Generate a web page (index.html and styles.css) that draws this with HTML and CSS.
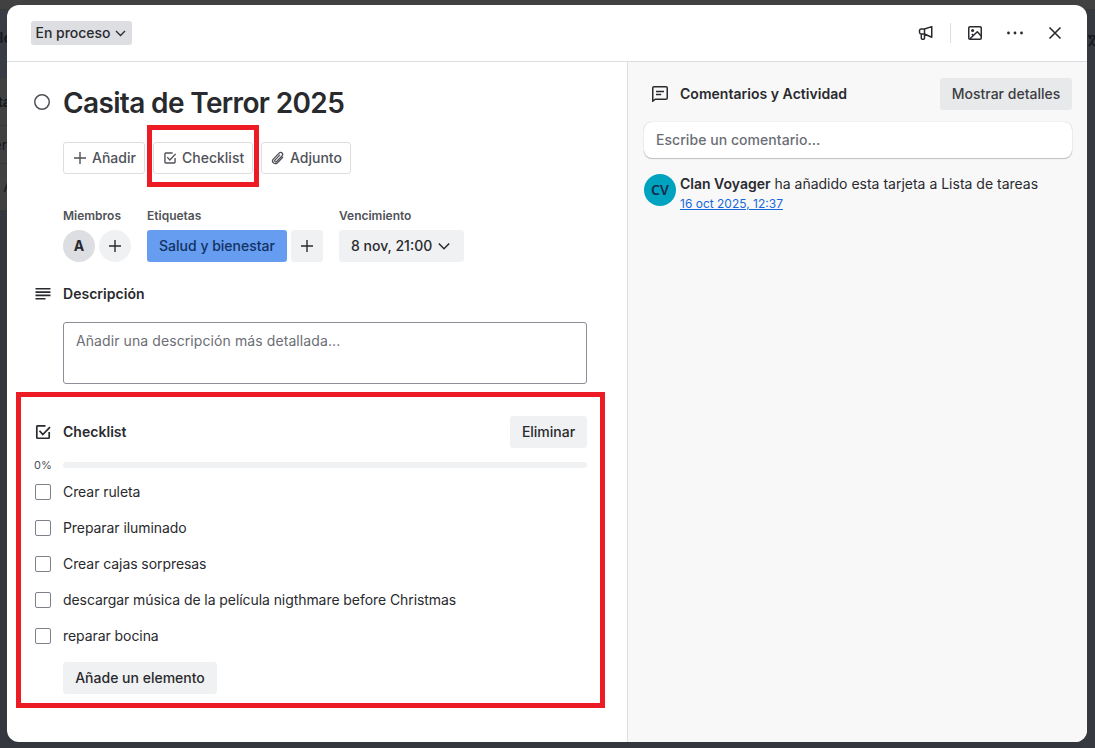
FILE: index.html
```html
<!DOCTYPE html>
<html lang="es">
<head>
<meta charset="utf-8">
<title>Casita de Terror 2025</title>
<link rel="stylesheet" href="styles.css">
</head>
<body>
<div class="board">
  <div class="board-left">
    <div class="frag frag-head"><b>lo</b></div>
    <div class="frag frag-one"><b>ta</b></div>
    <div class="frag frag-two"><span>er</span></div>
    <div class="frag frag-three"><span class="lead">A</span></div>
  </div>
  <div class="board-right">
    <svg class="board-icon" width="8" height="14" viewBox="0 0 8 14" fill="none" stroke="#14171b" stroke-width="1.5"><path d="M8 2H2l2 3M2 12l6-9M5 9l3 3"/></svg>
  </div>
</div>

<main class="modal">
  <header class="top">
    <button class="status"><span>En proceso</span>
      <svg width="16" height="16" viewBox="0 0 16 16" fill="none" stroke="#292a2e" stroke-width="1.3"><path d="M3 6l4.500 4.500L12 6"/></svg>
    </button>
    <div class="tools">
      <span class="tool"><svg width="16" height="16" viewBox="0 0 16 16" fill="none" stroke="#292a2e" stroke-width="1.5" stroke-linejoin="round"><path d="M6.500 4H3.200Q1.500 4 1.500 5.700v1.600Q1.500 9 3.200 9H6.500zM6.500 4l7.250-2.400v10.600L6.500 9M3.300 9v4.200q0 1 1 1h1.200q1 0 1-1V9"/></svg></span>
      <span class="rule"></span>
      <span class="tool"><svg width="16" height="16" viewBox="0 0 16 16" fill="none" stroke="#292a2e" stroke-width="1.5" stroke-linejoin="round"><rect x="1.750" y="1.750" width="12.500" height="12.500" rx="1.200"/><circle cx="5.600" cy="5.600" r="1.500" fill="#292a2e" stroke="none"/><path d="M3 13.800l7.300-7.100 3.900 4.200M6.300 10.500L4.800 9"/></svg></span>
      <span class="tool"><svg width="18" height="16" viewBox="0 0 18 16" fill="#292a2e"><circle cx="2.500" cy="8" r="1.400"/><circle cx="9" cy="8" r="1.400"/><circle cx="15.500" cy="8" r="1.400"/></svg></span>
      <span class="tool"><svg width="16" height="16" viewBox="0 0 16 16" fill="none" stroke="#292a2e" stroke-width="1.600"><path d="M2.500 2.500l11 11M13.500 2.500l-11 11"/></svg></span>
    </div>
  </header>

  <div class="body">
    <section class="details">
      <div class="title-row"><svg class="circle" width="16" height="16" viewBox="0 0 16 16" fill="none" stroke="#505258" stroke-width="1.500"><circle cx="8" cy="8" r="7.250"/></svg><h1>Casita de Terror 2025</h1></div>

      <div class="actions">
        <button class="outline add"><svg width="16" height="16" viewBox="0 0 16 16" fill="none" stroke="#505258" stroke-width="1.400"><path d="M8 2v12M2 8h12"/></svg><span>Añadir</span></button>
        <div class="marked">
          <button class="outline check"><svg width="14" height="14" viewBox="0 0 16 16" fill="none" stroke="#505258" stroke-width="1.600"><path d="M11 2.300H3.200q-1 0-1 1v9.400q0 1 1 1h9.600q1 0 1-1V8M4.800 7l3 3.300 6.700-7"/></svg><span>Checklist</span></button>
          <span class="mark mark-button"></span>
        </div>
        <button class="outline attach"><svg width="16" height="16" viewBox="0 0 16 16" fill="none" stroke="#505258" stroke-width="1.300" stroke-linecap="round"><path d="M12.700 7.200l-5.200 5.500c-1.200 1.300-3 1.300-4.100.2s-1.100-2.800.1-4l5.600-5.800c.9-.9 2.200-.9 3-.1s.8 2-.1 2.900l-5.300 5.500c-.5.500-1.200.5-1.700.1s-.4-1.100.1-1.600l4.600-4.800"/></svg><span>Adjunto</span></button>
      </div>

      <div class="facts">
        <div class="fact members"><h3>Miembros</h3><div class="chips"><span class="avatar">A</span><span class="plus round"><svg width="14" height="14" viewBox="0 0 14 14" fill="none" stroke="#292a2e" stroke-width="1.400"><path d="M7 1v12M1 7h12"/></svg></span></div></div>
        <div class="fact tags"><h3>Etiquetas</h3><div class="chips"><span class="tag">Salud y bienestar</span><span class="plus"><svg width="14" height="14" viewBox="0 0 14 14" fill="none" stroke="#292a2e" stroke-width="1.400"><path d="M7 1v12M1 7h12"/></svg></span></div></div>
        <div class="fact due"><h3>Vencimiento</h3><button class="date"><span>8 nov, 21:00</span><svg width="16" height="16" viewBox="0 0 16 16" fill="none" stroke="#292a2e" stroke-width="1.500"><path d="M2.800 5.500L8 10.700l5.200-5.200"/></svg></button></div>
      </div>

      <div class="head desc-head">
        <svg width="16" height="16" viewBox="0 0 16 16" fill="#292a2e"><path d="M.500 2h15v1.600H.500zM.500 5.300h15v1.600H.500zM.500 8.600h15v1.600H.500zM.500 12h10v1.600H.500z"/></svg>
        <h2>Descripción</h2>
      </div>
      <div class="desc">Añadir una descripción más detallada...</div>

      <div class="checklist">
        <div class="head list-head">
          <svg width="16" height="16" viewBox="0 0 16 16" fill="none" stroke="#292a2e" stroke-width="1.700"><path d="M10.500 1.850H2.500q-.7 0-.7.700v11q0 .7.700.7h11q.7 0 .7-.7V8M4.500 6.800l3.300 3.700 7.200-7.300"/></svg>
          <h2>Checklist</h2>
          <button class="gray remove">Eliminar</button>
        </div>
        <div class="progress"><span class="pct">0%</span><span class="bar"></span></div>
        <ul class="items">
          <li><span class="box"></span><span>Crear ruleta</span></li>
          <li><span class="box"></span><span>Preparar iluminado</span></li>
          <li><span class="box"></span><span>Crear cajas sorpresas</span></li>
          <li><span class="box"></span><span>descargar música de la película nigthmare before Christmas</span></li>
          <li><span class="box"></span><span>reparar bocina</span></li>
        </ul>
        <button class="gray new-item">Añade un elemento</button>
        <span class="mark mark-list"></span>
      </div>
    </section>

    <aside class="activity">
      <div class="act-head">
        <svg width="18" height="18" viewBox="0 0 18 18" fill="none" stroke="#292a2e" stroke-width="1.500" stroke-linejoin="round"><path d="M1.750 16.200V3q0-1.250 1.250-1.250h12q1.250 0 1.250 1.250v10q0 1.250-1.250 1.250H4.200zM5 6.500h8M5 9.500h5.200"/></svg>
        <h2>Comentarios y Actividad</h2>
        <button class="show">Mostrar detalles</button>
      </div>
      <div class="comment">Escribe un comentario...</div>
      <div class="entry">
        <span class="cv">CV</span>
        <div class="entry-text"><p><b>Clan Voyager</b> ha añadido esta tarjeta a Lista de tareas</p><a>16 oct 2025, 12:37</a></div>
      </div>
    </aside>
  </div>
</main>
</body>
</html>
```
FILE: styles.css
```css
* { box-sizing: border-box; }
body {
  margin: 0; width: 1095px; height: 748px; overflow: hidden;
  padding: 5px 8px 6px 7px;
  background: #34373d;
  font: 400 14px/20px Inter, sans-serif; color: #292a2e;
}
h1, h2, h3, p, ul { margin: 0; padding: 0; }
ul { list-style: none; }
button { font: inherit; color: inherit; border: 0; padding: 0; margin: 0; display: flex; align-items: center; white-space: nowrap; }
svg { display: block; flex: none; }

/* Dimmed board behind the dialog */
.board { position: absolute; inset: 0; display: flex; justify-content: space-between; background: #34373d; border-top: 9px solid #414141; }
.board-left { width: 14px; }
.board-right { width: 14px; padding: 24px 0 0 6px; background: #363a40; border-top: 1px solid #393939; }
.frag { width: 9px; display: flex; justify-content: flex-end; align-items: center; color: #15191f; font-size: 14px; background: #414141; border-top: 1px solid #393939; }
.frag-head { height: 69px; padding-bottom: 12px; background: #383d45; }
.frag-head b { margin-right: -3px; }
.frag-one { height: 47px; border: 0; }
.frag-one b { margin-right: -2px; }
.frag-two { height: 38px; }
.frag-two span { margin-right: 2px; }
.frag-three { height: 47px; }
.frag-three .lead { margin-right: -4px; }

.modal { position: relative; width: 1080px; height: 737px; border-radius: 12px; overflow: hidden; background: #fff; display: flex; flex-direction: column; }
.top { height: 57px; border-bottom: 1px solid #dddee1; display: flex; align-items: center; justify-content: space-between; padding: 0 16px 0 24px; flex: none; }
.status { width: 101px; height: 24px; border-radius: 3px; background: #dddee1; padding: 0 0 0 4px; gap: 2px; font-weight: 500; }
.status span { width: 76px; letter-spacing: -.03px; }
.tools { display: flex; align-items: center; }
.tool { width: 32px; height: 32px; margin-left: 8px; display: flex; align-items: center; justify-content: center; }
.rule { width: 1px; height: 20px; background: #dddee1; margin-left: 8px; }
.body { flex: 1; display: flex; }

.details { width: 620px; padding: 24px 40px 0 28px; }
.title-row { height: 32px; display: flex; align-items: center; }
.circle { margin: 0 13px 0 -1px; }
h1 { font-size: 28px; line-height: 32px; padding-top: 1px; font-weight: 600; white-space: nowrap; letter-spacing: -.64px; }
h2 { font-size: 14px; line-height: 20px; font-weight: 600; letter-spacing: .03px; }
.actions { display: flex; gap: 8px; margin: 24px 0 0 28px; }
.outline { height: 32px; border: 1px solid #dddee1; border-radius: 3px; background: #fff; color: #505258; font-weight: 500; }
.add { width: 82px; padding-left: 8px; gap: 4px; }
.check { width: 100px; padding-left: 9px; gap: 5px; }
.attach { width: 90px; padding-left: 8px; gap: 4px; }
.marked { position: relative; }
.mark { position: absolute; border: 5px solid #ed1c24; pointer-events: none; }
.mark-button { left: -6px; top: -17px; width: 112px; height: 62px; }
.facts { display: flex; margin: 32px 0 0 28px; gap: 16px; }
h3 { font-size: 12px; line-height: 20px; font-weight: 600; color: #505258; margin-bottom: 4px; }
.chips { display: flex; gap: 4px; }
.avatar, .plus { width: 32px; height: 32px; display: flex; align-items: center; justify-content: center; border-radius: 3px; background: #f0f1f2; }
.avatar { border-radius: 50%; background: #dddee1; font-weight: 700; }
.round { border-radius: 50%; }
.tag { width: 140px; height: 32px; line-height: 32px; text-align: center; border-radius: 3px; background: #669df1; color: #123263; font-weight: 500; white-space: nowrap; }
.date { width: 125px; height: 32px; border-radius: 3px; background: #f0f1f2; padding-left: 12px; gap: 4px; font-weight: 500; }
.head { display: flex; align-items: center; height: 32px; }
.head h2 { margin-left: 12px; }
.desc-head { margin-top: 16px; }
.desc { margin: 12px 0 0 28px; width: 524px; height: 62px; border: 1px solid #8c8f97; border-radius: 3px; padding: 8px 12px; color: #6b6e76; letter-spacing: .09px; }
.checklist { position: relative; margin-top: 32px; }
.mark-list { left: -19px; top: -24px; width: 589px; height: 316px; }
.gray { height: 32px; border-radius: 3px; background: #f0f1f2; font-weight: 500; justify-content: center; }
.remove { width: 77px; margin-left: auto; }
.progress { display: flex; align-items: center; height: 16px; margin-top: 9px; }
.pct { width: 29px; margin-left: -1px; font-size: 11px; color: #505258; }
.bar { width: 524px; height: 6px; border-radius: 3px; background: #f0f1f2; }
.items { margin-top: 1px; letter-spacing: -.07px; }
.items li { height: 36px; display: flex; align-items: center; white-space: nowrap; }
.box { width: 16px; height: 16px; border: 1px solid #7d818a; border-radius: 2px; margin-right: 12px; }
.new-item { width: 154px; margin: 8px 0 0 28px; }

.activity { flex: 1; border-left: 1px solid #dddee1; background: #f8f8f8; padding: 16px 15px 0 15px; }
.act-head { display: flex; align-items: center; padding-left: 8px; height: 32px; }
.act-head h2 { margin-left: 11px; }
.show { width: 132px; height: 32px; margin-left: auto; border-radius: 3px; background: #e8e9eb; justify-content: center; font-weight: 500; color: #3b3d42; }
.comment { height: 36px; margin: 12px 0 0 1px; width: 428px; border-radius: 8px; background: #fff; box-shadow: 0 1px 1px #1e1f2140, 0 0 1px #1e1f214f; padding: 8px 12px; color: #6b6e76; font-weight: 450; letter-spacing: .05px; }
.entry { display: flex; gap: 4px; margin: 16px 0 0 1px; }
.cv { width: 32px; height: 32px; border-radius: 50%; background: #00a3bf; color: #172b4d; font: 600 14px/32px "Noto Sans", sans-serif; text-align: center; }
.entry-text { white-space: nowrap; }
.entry-text b { font-weight: 600; }
.entry-text a { display: block; font-size: 12px; line-height: 20px; color: #1868db; text-decoration: underline; width: max-content; }
```
